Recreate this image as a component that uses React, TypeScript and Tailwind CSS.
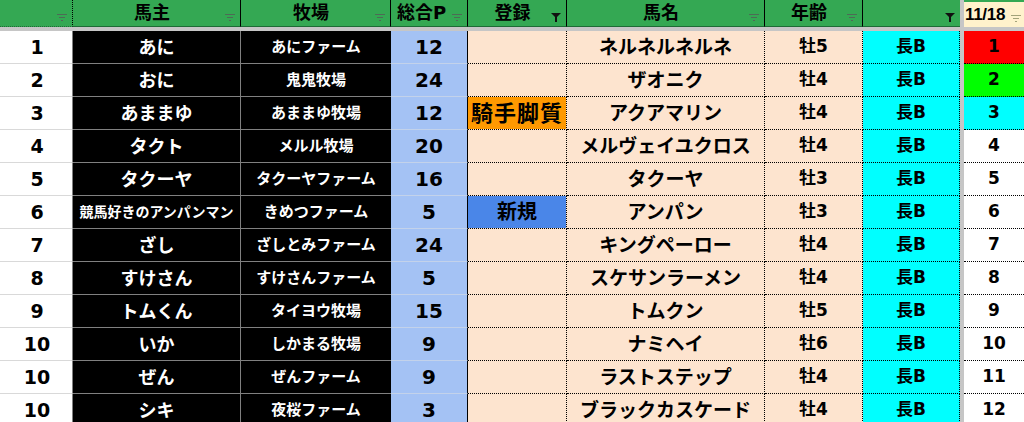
import React from "react";

type Row = {
    rank: number;
    owner: string;
    farm: string;
    pts: number;
    reg?: "jockey" | "new";
    horse: string;
    age: string;
    day: number;
    dayBg: string;
};

const rows: Row[] = [
    { rank: 1, owner: "あに", farm: "あにファーム", pts: 12, horse: "ネルネルネルネ", age: "牡5", day: 1, dayBg: "bg-[#ff0000]" },
    { rank: 2, owner: "おに", farm: "鬼鬼牧場", pts: 24, horse: "ザオニク", age: "牡4", day: 2, dayBg: "bg-[#00ff00]" },
    { rank: 3, owner: "あままゆ", farm: "あままゆ牧場", pts: 12, reg: "jockey", horse: "アクアマリン", age: "牡4", day: 3, dayBg: "bg-[#00ffff]" },
    { rank: 4, owner: "タクト", farm: "メルル牧場", pts: 20, horse: "メルヴェイユクロス", age: "牡4", day: 4, dayBg: "bg-white" },
    { rank: 5, owner: "タクーヤ", farm: "タクーヤファーム", pts: 16, horse: "タクーヤ", age: "牡3", day: 5, dayBg: "bg-white" },
    { rank: 6, owner: "競馬好きのアンパンマン", farm: "きめつファーム", pts: 5, reg: "new", horse: "アンパン", age: "牡3", day: 6, dayBg: "bg-white" },
    { rank: 7, owner: "ざし", farm: "ざしとみファーム", pts: 24, horse: "キングペーロー", age: "牡4", day: 7, dayBg: "bg-white" },
    { rank: 8, owner: "すけさん", farm: "すけさんファーム", pts: 5, horse: "スケサンラーメン", age: "牡4", day: 8, dayBg: "bg-white" },
    { rank: 9, owner: "トムくん", farm: "タイヨウ牧場", pts: 15, horse: "トムクン", age: "牡5", day: 9, dayBg: "bg-white" },
    { rank: 10, owner: "いか", farm: "しかまる牧場", pts: 9, horse: "ナミヘイ", age: "牡6", day: 10, dayBg: "bg-white" },
    { rank: 10, owner: "ぜん", farm: "ぜんファーム", pts: 9, horse: "ラストステップ", age: "牡4", day: 11, dayBg: "bg-white" },
    { rank: 10, owner: "シキ", farm: "夜桜ファーム", pts: 3, horse: "ブラックカスケード", age: "牡4", day: 12, dayBg: "bg-white" },
];

function SortIcon({ color = "#4d6b55" }: { color?: string }) {
    return (
        <svg width="10" height="7" viewBox="0 0 10 7" className="shrink-0">
            <rect x="0" y="0" width="10" height="1" fill={color} />
            <rect x="2" y="3" width="6" height="1" fill={color} />
            <rect x="4" y="6" width="2" height="1" fill={color} />
        </svg>
    );
}

function FunnelIcon() {
    return (
        <svg width="10" height="9" viewBox="0 0 10 9" className="shrink-0">
            <path d="M0 0 H10 L6 4 V9 H4 V4 Z" fill="#111" />
        </svg>
    );
}

function HeadCell({
    label,
    icon,
    left,
    last,
}: {
    label?: string;
    icon: React.ReactNode;
    left?: boolean;
    last?: boolean;
}) {
    return (
        <div
            className={`h-[27px] flex items-center pr-[5px] ${
                last ? "" : "border-r border-dotted border-black"
            } border-b border-b-[#1e6b36] border-solid`}
        >
            <div
                className={`flex-1 text-[18px] leading-none font-bold text-black ${
                    left ? "text-left pl-[6px] text-[17px]" : "text-center pl-[6px]"
                }`}
            >
                {label}
            </div>
            <div className="pt-[8px]">{icon}</div>
        </div>
    );
}

export default function App() {
    const dotted = "border-r border-b border-dotted border-black";

    return (
        <div className="w-[1024px] h-[422px] overflow-hidden bg-white font-['DejaVu_Sans','Noto_Sans_CJK_JP',sans-serif] font-bold">
            <div className="grid grid-cols-[73px_168px_150px_77px_99px_198px_98px_97px_4px_60px]">
                {/* header */}
                <div className="contents">
                    <div className="bg-[#34a853] flex items-center justify-end pr-[5px] h-[27px] border-r border-dotted border-black border-b border-b-[#1e6b36]">
                        <div className="pt-[8px]">
                            <SortIcon />
                        </div>
                    </div>
                    <div className="bg-[#34a853]">
                        <HeadCell label="馬主" icon={<SortIcon />} />
                    </div>
                    <div className="bg-[#34a853]">
                        <HeadCell label="牧場" icon={<SortIcon />} />
                    </div>
                    <div className="bg-[#34a853]">
                        <HeadCell label="総合P" icon={<SortIcon />} left />
                    </div>
                    <div className="bg-[#34a853]">
                        <HeadCell label="登録" icon={<FunnelIcon />} />
                    </div>
                    <div className="bg-[#34a853]">
                        <HeadCell label="馬名" icon={<SortIcon />} />
                    </div>
                    <div className="bg-[#34a853]">
                        <HeadCell label="年齢" icon={<SortIcon />} />
                    </div>
                    <div className="bg-[#34a853]">
                        <HeadCell icon={<FunnelIcon />} last />
                    </div>
                    <div className="bg-[#c6c6c6]" />
                    <div className="bg-[#fff2cc] h-[27px] flex items-center pl-[1px] pr-[3px] border-t-2 border-[#34a853]">
                        <span className="flex-1 font-['Liberation_Sans',sans-serif] text-[17px] leading-none text-black tracking-[-0.3px]">
                            11/18
                        </span>
                        <div className="pt-[7px]">
                            <SortIcon color="#a3a37a" />
                        </div>
                    </div>
                </div>

                {/* gray band under header */}
                <div className="col-span-10 h-[4px] bg-[#c6c6c6]" />

                {rows.map((r, i) => (
                    <div key={i} className="contents">
                        <div className="h-[33px] flex items-center justify-center border-b border-[#d9d9d9] border-r border-r-[#808080] text-[19px] text-black pl-[2px]">
                            {r.rank}
                        </div>
                        <div
                            className={`h-[33px] flex items-center justify-center bg-black text-white border-r border-b border-[#808080] ${
                                r.owner.length > 6 ? "text-[14px]" : "text-[18px]"
                            }`}
                        >
                            {r.owner}
                        </div>
                        <div className="h-[33px] flex items-center justify-center bg-black text-white border-b border-[#808080] text-[15px]">
                            {r.farm}
                        </div>
                        <div className="h-[33px] flex items-center justify-center bg-[#a4c2f4] border-b border-[#c3d2ea] border-r border-r-black border-r-dotted text-[20px] text-black">
                            {r.pts}
                        </div>
                        <div className={`h-[33px] bg-[#fde4cf] ${dotted}`}>
                            {r.reg === "jockey" && (
                                <div className="h-full bg-[#ff9900] flex items-center justify-center text-[22px] text-black tracking-[1px] font-semibold">
                                    騎手脚質
                                </div>
                            )}
                            {r.reg === "new" && (
                                <div className="h-full bg-[#4a86e8] flex items-center justify-center text-[20px] text-black font-semibold">
                                    新規
                                </div>
                            )}
                        </div>
                        <div className={`h-[33px] flex items-center justify-center bg-[#fde4cf] ${dotted} text-[19px] text-black font-semibold`}>
                            {r.horse}
                        </div>
                        <div className={`h-[33px] flex items-center justify-center bg-[#fde4cf] ${dotted} text-[17px] text-black`}>
                            {r.age}
                        </div>
                        <div className={`h-[33px] flex items-center justify-center bg-[#00ffff] ${dotted} text-[17px] text-black`}>
                            長B
                        </div>
                        <div className="h-[33px] bg-[#c6c6c6]" />
                        <div
                            className={`h-[33px] flex items-center justify-center ${r.dayBg} border-b border-dotted border-black text-[17px] text-black`}
                        >
                            {r.day}
                        </div>
                    </div>
                ))}
            </div>
        </div>
    );
}
